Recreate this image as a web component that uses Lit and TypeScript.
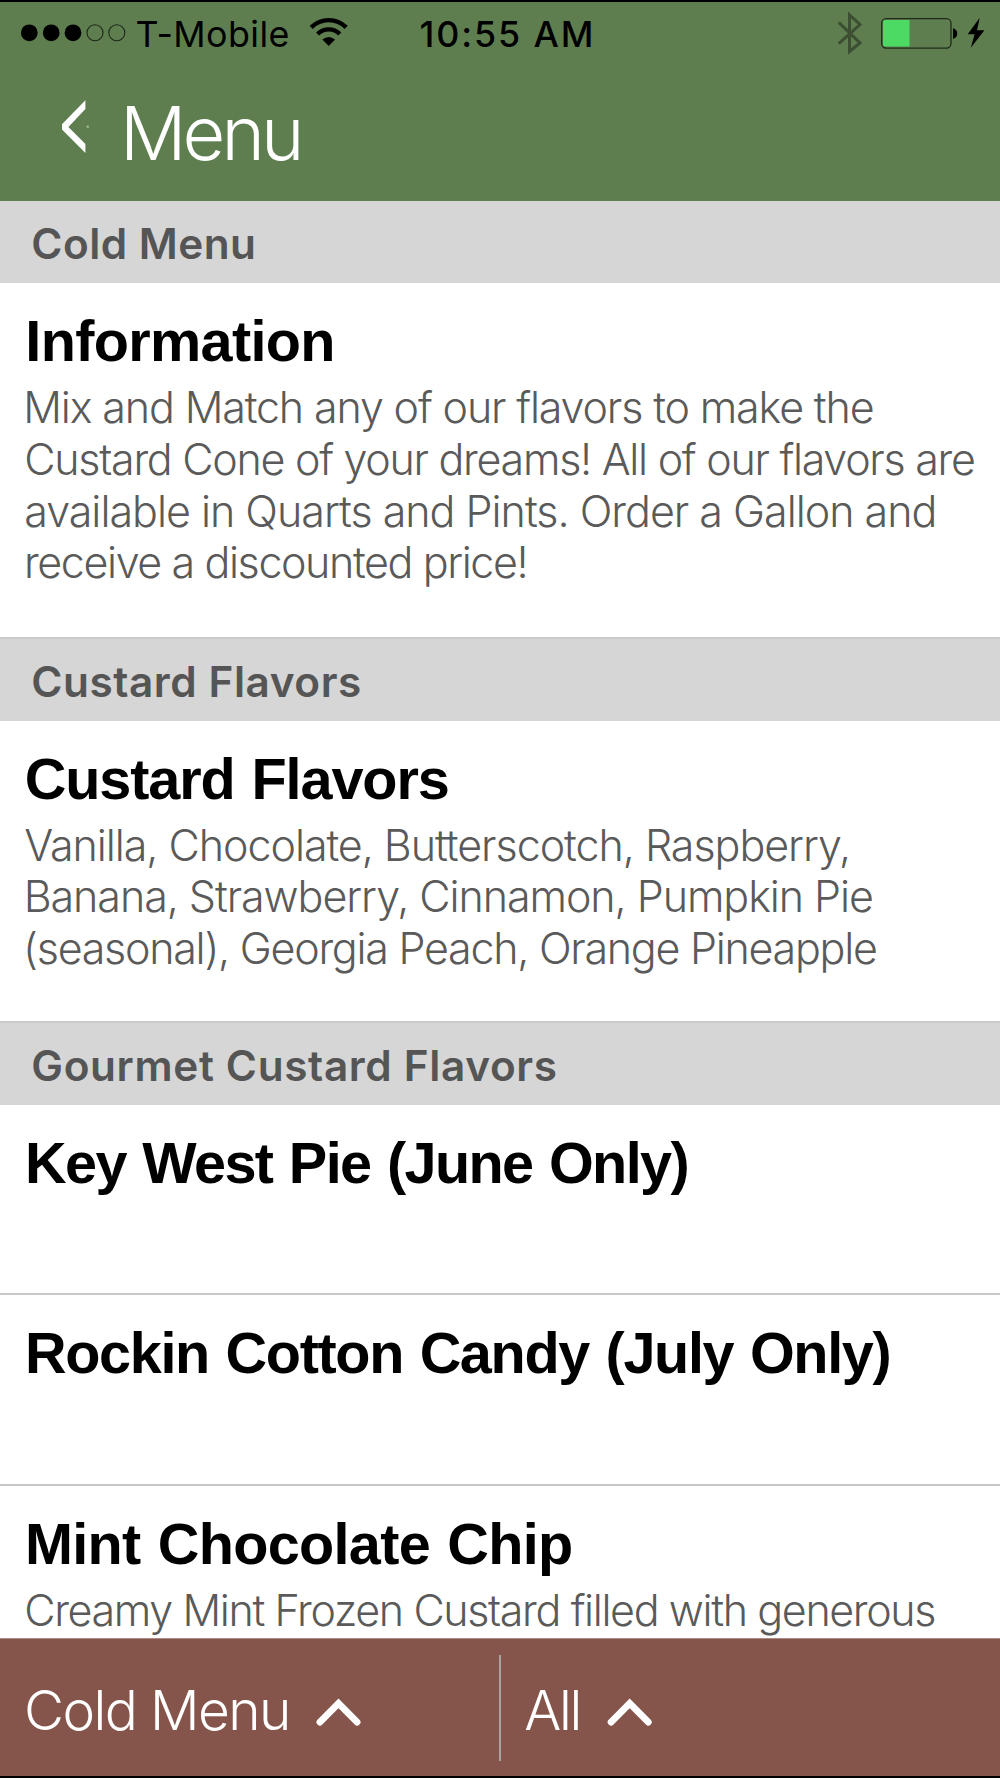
import { LitElement, html, svg, css, nothing } from "lit";
import { customElement, property } from "lit/decorators.js";
import { styleMap } from "lit/directives/style-map.js";

interface Line {
  text: string;
  /** Left and right edges of the inked text, relative to its column. */
  from: number;
  to: number;
}

interface Item {
  title: Line;
  lines: Line[];
  kind: string;
}

interface Section {
  label: Line;
  items: Item[];
}

const line = (text: string, from: number, to: number): Line => ({ text, from, to });

const SECTIONS: Section[] = [
  {
    label: line("Cold Menu", 33.3, 254),
    items: [
      {
        kind: "info",
        title: line("Information", 28.3, 332.3),
        lines: [
          line("Mix and Match any of our flavors to make the", 27.3, 872.7),
          line("Custard Cone of your dreams! All of our flavors are", 26.3, 974),
          line("available in Quarts and Pints. Order a Gallon and", 26.3, 934.5),
          line("receive a discounted price!", 27, 525.5),
        ],
      },
    ],
  },
  {
    label: line("Custard Flavors", 33.3, 360),
    items: [
      {
        kind: "flavors",
        title: line("Custard Flavors", 26.7, 447.7),
        lines: [
          line("Vanilla, Chocolate, Butterscotch, Raspberry,", 25.3, 848),
          line("Banana, Strawberry, Cinnamon, Pumpkin Pie", 27.7, 872),
          line("(seasonal), Georgia Peach, Orange Pineapple", 27, 876),
        ],
      },
    ],
  },
  {
    label: line("Gourmet Custard Flavors", 33.3, 555.8),
    items: [
      { kind: "single", title: line("Key West Pie (June Only)", 28, 687.5), lines: [] },
      { kind: "single", title: line("Rockin Cotton Candy (July Only)", 28, 889.5), lines: [] },
      {
        kind: "last",
        title: line("Mint Chocolate Chip", 28, 571),
        lines: [line("Creamy Mint Frozen Custard filled with generous", 26.3, 934.3)],
      },
    ],
  },
];

const FONT = {
  carrier: "400 35.8px Inter, sans-serif",
  clock: "500 35.8px Inter, sans-serif",
  heading: "300 73.8px Inter, sans-serif",
  label: "600 42.3px Inter, sans-serif",
  title: 'bold 57.6px "Liberation Sans", sans-serif',
  body: "300 43px Inter, sans-serif",
  tab: "300 55px Inter, sans-serif",
};

const pen = document.createElement("canvas").getContext("2d")!;

/** One line of text, tracked so that its ink runs exactly between two edges. */
@customElement("tracked-line")
export class TrackedLine extends LitElement {
  @property({ attribute: false }) line: Line = line("", 0, 0);
  @property() font = "";
  /** Extra width given to every space between words. */
  @property({ type: Number }) gap = 0;

  static styles = css`
    :host { display: block; white-space: pre; }
    .ink { display: block; white-space: pre; font-variant-ligatures: none; }
  `;

  render() {
    pen.font = this.font;
    const { text, from, to } = this.line;
    const m = pen.measureText(text);
    const spaces = text.split(" ").length - 1;
    const ink = m.actualBoundingBoxLeft + m.actualBoundingBoxRight + spaces * this.gap;
    const spacing = (to - from - ink) / (text.length - 1);
    return html`<span
      class="ink"
      style=${styleMap({
        font: this.font,
        lineHeight: "inherit",
        letterSpacing: `${spacing.toFixed(3)}px`,
        wordSpacing: `${this.gap}px`,
        marginLeft: `${(from + m.actualBoundingBoxLeft).toFixed(2)}px`,
      })}
      >${text}</span
    >`;
  }
}

const text = (l: Line, font: string, cls: string, gap = 0) =>
  html`<tracked-line class=${cls} .line=${l} .font=${font} .gap=${gap}></tracked-line>`;

const signalDot = (x: number, full: boolean) =>
  full
    ? svg`<circle cx=${x} cy="32.8" r="8.4" fill="#000" />`
    : svg`<circle cx=${x} cy="32.8" r="8" fill="none" stroke="#1d2718" stroke-width="1.1" />`;

@customElement("app-root")
export class AppRoot extends LitElement {
  static styles = css`
    :host {
      display: block;
      width: 1000px;
      height: 1778px;
      background: #000;
      font-family: Inter, sans-serif;
    }
    .screen {
      box-sizing: border-box;
      height: 1778px;
      padding: 2px 0;
      display: flex;
      flex-direction: column;
      overflow: hidden;
    }
    .top { background: #5f7e50; height: 199px; flex: none; color: #fff; }
    .status { display: grid; grid-template-columns: 136px 165px 60px 470px 169px; height: 60px; color: #000; }
    .status svg { display: block; }
    .carrier, .clock { line-height: 64px; }
    .nav { display: flex; height: 139px; }
    .nav svg { flex: none; }
    .heading { line-height: 116px; padding-top: 14px; }
    .list { flex: 1; min-height: 0; overflow: hidden; background: #fff; }
    .label {
      box-sizing: border-box;
      height: 83.5px;
      border-top: 2px solid #cacaca;
      background: #d6d6d6;
      color: #555;
      line-height: 85px;
    }
    .section:first-child .label { height: 82px; border-top: 0; line-height: 85px; }
    .item { box-sizing: border-box; padding-top: 28px; }
    .item + .item { border-top: 2px solid #c8c8c8; }
    .info { height: 354px; }
    .flavors { height: 300.5px; }
    .single { height: 188.5px; }
    .item + .single { height: 190.5px; }
    .title { color: #000; line-height: 61px; }
    .copy { margin-top: 10px; color: #5a5a5a; }
    .body { line-height: 51.75px; }
    .tabs {
      flex: none;
      height: 137px;
      display: grid;
      grid-template-columns: 499px 2px 1fr;
      border-top: 1px solid #a98a84;
      background: #85544a;
      color: #fff;
    }
    .tab { display: flex; }
    .tab-name { line-height: 142px; }
    .tab svg { display: block; flex: none; }
    .split { background: #a9a3a1; height: 106px; margin-top: 16px; }
  `;

  private status() {
    return html`<div class="status">
      <svg width="136" height="60" viewBox="0 2 136 60">
        ${[29.3, 51.2, 73].map((x) => signalDot(x, true))}
        ${[95, 116.8].map((x) => signalDot(x, false))}
      </svg>
      ${text(line("T-Mobile", 0.5, 152.5), FONT.carrier, "carrier")}
      <svg width="60" height="60" viewBox="301 2 60 60">
        <path d="M311.2 27.4 A24.8 24.8 0 0 1 346.2 27.4" fill="none" stroke="#000" stroke-width="4.4" />
        <path d="M317.6 34 A15.6 15.6 0 0 1 339.8 34" fill="none" stroke="#000" stroke-width="4.4" />
        <path d="M322.3 39.6 Q328.7 34.3 335.1 39.6 L328.7 46Z" fill="#000" />
      </svg>
      ${text(line("10:55 AM", 59.5, 229.8), FONT.clock, "clock")}
      <svg width="169" height="60" viewBox="831 2 169 60">
        <path d="M838.7 22.3 L860 43 L849.5 51.5 V15 L860 24.5 L838.7 43.7" fill="none" stroke="#3c4f33" stroke-width="3" />
        <rect x="881.7" y="18.7" width="69.3" height="29.4" rx="4.5" fill="none" stroke="#1f2a1a" stroke-width="1.3" />
        <path d="M885 20 H909.5 V46.5 H885 Q883 46.5 883 44.5 V22 Q883 20 885 20Z" fill="#4cd964" />
        <path d="M953 28.2 Q957.2 29.3 957.2 33.6 Q957.2 37.8 953 39Z" fill="#000" />
        <path d="M979.7 17.8 L967.7 34.2 H974.6 L970.8 47.7 L984.4 30.2 H977Z" fill="#000" />
      </svg>
    </div>`;
  }

  private caret(left: number) {
    return html`<svg width="120" height="136" viewBox="${-left} 1639 120 136">
      <path d="M3.4 1722.2 L22 1703.4 L40.6 1722.2" fill="none" stroke="#fff" stroke-width="6.8" stroke-linecap="round" />
    </svg>`;
  }

  render() {
    return html`<div class="screen">
      <header class="top">
        ${this.status()}
        <div class="nav">
          <svg width="100" height="139" viewBox="0 62 100 139">
            <path d="M85.4 100.3 V109 L68.4 126.9 L85.4 144 V153 L62 129.5 V124.2Z" fill="#fff" />
            <circle cx="87.8" cy="126.7" r="1.2" fill="#a5b79c" />
          </svg>
          ${text(line("Menu", 27, 199), FONT.heading, "heading")}
        </div>
      </header>
      <main class="list">
        ${SECTIONS.map(
          (s) => html`<section class="section">
            ${text(s.label, FONT.label, "label")}
            ${s.items.map(
              (i) => html`<article class="item ${i.kind}">
                ${text(i.title, FONT.title, "title", 2)}
                ${i.lines.length
                  ? html`<div class="copy">${i.lines.map((l) => text(l, FONT.body, "body"))}</div>`
                  : nothing}
              </article>`
            )}
          </section>`
        )}
      </main>
      <footer class="tabs">
        <div class="tab">
          ${text(line("Cold Menu", 27, 287), FONT.tab, "tab-name")}
          ${this.caret(26.5)}
        </div>
        <div class="split"></div>
        <div class="tab">
          ${text(line("All", 24.2, 77.5), FONT.tab, "tab-name")}
          ${this.caret(27.7)}
        </div>
      </footer>
    </div>`;
  }
}
